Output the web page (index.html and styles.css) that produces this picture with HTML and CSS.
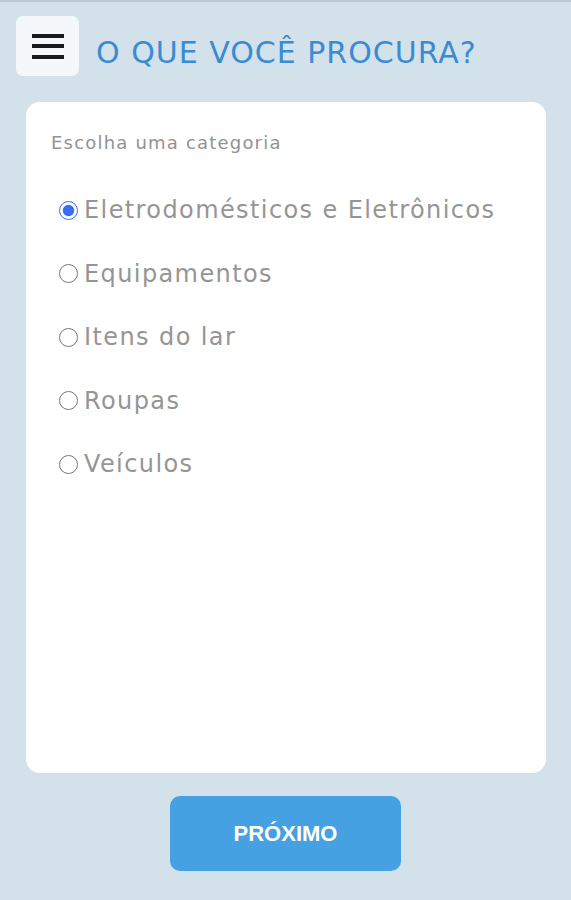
FILE: index.html
```html
<!DOCTYPE html>
<html lang="pt-BR">
<head>
    <meta charset="UTF-8">
    <meta name="viewport" content="width=device-width, initial-scale=1.0">
    <title>O que você procura?</title>
    <link rel="stylesheet" href="styles.css">
</head>
<body>

<div class="page">
    <header class="topbar">
        <button class="menu-btn" type="button" aria-label="Menu">
            <span class="bar"></span>
            <span class="bar"></span>
            <span class="bar"></span>
        </button>
        <h1 class="title">O QUE VOCÊ PROCURA?</h1>
    </header>

    <form class="card" id="categoryForm">
        <p class="hint">Escolha uma categoria</p>
        <div class="options">
            <label class="option"><input type="radio" name="categoria" value="eletro" checked><span>Eletrodomésticos e Eletrônicos</span></label>
            <label class="option"><input type="radio" name="categoria" value="equip"><span>Equipamentos</span></label>
            <label class="option"><input type="radio" name="categoria" value="lar"><span>Itens do lar</span></label>
            <label class="option"><input type="radio" name="categoria" value="roupas"><span>Roupas</span></label>
            <label class="option"><input type="radio" name="categoria" value="veiculos"><span>Veículos</span></label>
        </div>
    </form>

    <div class="actions">
        <button class="next-btn" type="submit" form="categoryForm">PRÓXIMO</button>
    </div>
</div>

</body>
</html>
```

FILE: styles.css
```css
body {
    margin: 0;
    background-color: #d3e2ea;
    font-family: "DejaVu Sans", "Open Sans", sans-serif;
}

.page {
    min-height: 898px;
    border-top: 2px solid #b9cad5;
    box-sizing: border-box;
}

.topbar {
    display: flex;
    align-items: center;
    gap: 17px;
    padding: 14px 16px 0 16px;
}

.menu-btn {
    width: 63px;
    height: 60px;
    display: flex;
    flex-direction: column;
    justify-content: center;
    align-items: center;
    gap: 6.5px;
    padding: 0;
    border: none;
    border-radius: 7px;
    background-color: #f4f8fb;
    cursor: pointer;
}

.bar {
    display: block;
    width: 32px;
    height: 4px;
    background-color: #1b1b1b;
}

.title {
    margin: 12px 0 0 0;
    font-size: 30px;
    font-weight: 400;
    letter-spacing: 1px;
    color: #3a8bd5;
}

.card {
    margin: 26px 25px 0 26px;
    height: 671px;
    box-sizing: border-box;
    padding: 31px 25px;
    background-color: white;
    border-radius: 14px;
}

.hint {
    margin: 0;
    font-size: 18px;
    line-height: 20px;
    letter-spacing: 1.2px;
    color: #939393;
}

.options {
    display: flex;
    flex-direction: column;
    gap: 25.5px;
    margin-top: 38px;
    padding-left: 8px;
}

.option {
    display: flex;
    align-items: center;
    gap: 6px;
    height: 38px;
    font-size: 24px;
    letter-spacing: 1.4px;
    color: #959595;
}

.option input {
    width: 19px;
    height: 19px;
    margin: 0;
    accent-color: #3b6df0;
}

.actions {
    display: flex;
    justify-content: center;
    padding-top: 23px;
}

.next-btn {
    width: 231px;
    height: 75px;
    border: none;
    border-radius: 10px;
    background-color: #45a1e1;
    color: white;
    font-family: "Liberation Sans", Arial, sans-serif;
    font-size: 22px;
    font-weight: bold;
    cursor: pointer;
}
```
